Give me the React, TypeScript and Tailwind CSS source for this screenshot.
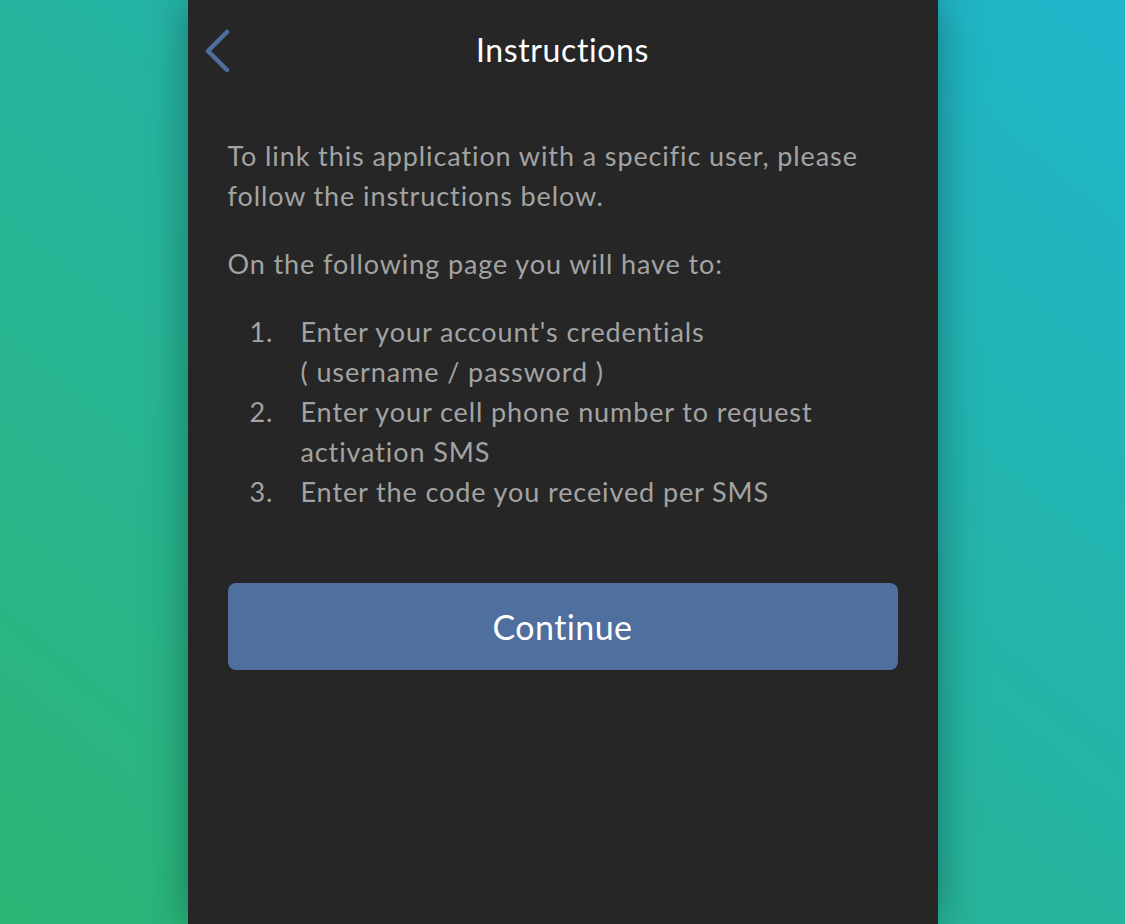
export default function App() {
  const steps = [
    ["Enter your account's credentials", "( username / password )"],
    ["Enter your cell phone number to request", "activation SMS"],
    ["Enter the code you received per SMS"],
  ]

  return (
    <div
      className="flex h-[924px] w-full justify-center overflow-hidden bg-linear-to-tr from-[#2cb574] via-[#26b49f] to-[#21b5cc]"
      style={{ fontFamily: 'Lato, "Noto Sans", sans-serif' }}
    >
      <div className="flex w-[750px] flex-col bg-[#262626] shadow-[0_0_40px_rgba(0,0,0,0.35)]">
        {/* header */}
        <div className="relative flex h-[100px] items-center justify-center">
          <button className="absolute left-[9px] top-[25px] p-1">
            <svg width="30" height="44" viewBox="0 0 30 44" fill="none">
              <path d="M26 3 L7 22 L26 41" stroke="#4e6e9e" strokeWidth="4.5" strokeLinecap="round" strokeLinejoin="round" />
            </svg>
          </button>
          <h1 className="text-[32px] font-normal tracking-[0.6px] text-white">Instructions</h1>
        </div>

        {/* body */}
        <div className="px-10 pt-[36px] text-[27px] leading-[40px] tracking-[0.9px] text-[#a3a3a3]">
          <p>To link this application with a specific user, please follow the instructions below.</p>
          <p className="mt-[28px]">On the following page you will have to:</p>
          <ol className="mt-[28px]">
            {steps.map((lines, i) => (
              <li key={i} className="flex">
                <span className="w-[73px] shrink-0 pl-[22px]">{i + 1}.</span>
                <span>
                  {lines.map((l) => (
                    <span key={l} className="block">{l}</span>
                  ))}
                </span>
              </li>
            ))}
          </ol>

          <button className="mt-[71px] flex h-[87px] w-full items-center justify-center rounded-[8px] bg-[#4f6f9e] text-[34px] tracking-[0.4px] text-white">
            Continue
          </button>
        </div>
      </div>
    </div>
  )
}
